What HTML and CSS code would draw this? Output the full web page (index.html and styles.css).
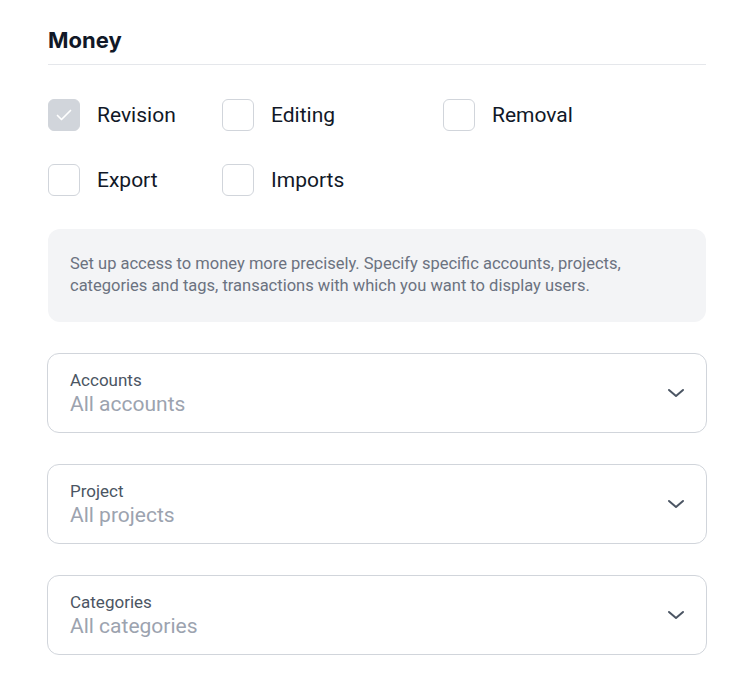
FILE: index.html
```html
<!DOCTYPE html>
<html lang="en">
<head>
    <meta charset="UTF-8">
    <meta name="viewport" content="width=device-width, initial-scale=1.0">
    <title>Money access</title>
    <link rel="stylesheet" href="styles.css">
</head>
<body>
    <div class="container">
        <h2 class="section-title">Money</h2>

        <div class="rights">
            <label class="check">
                <span class="box checked">
                    <svg width="18" height="18" viewBox="0 0 18 18"><path d="M2.5 9.5l4 4 9-9" fill="none" stroke="#fff" stroke-width="1.7" stroke-linecap="round" stroke-linejoin="round"/></svg>
                </span>
                <span class="check-label">Revision</span>
            </label>
            <label class="check">
                <span class="box"></span>
                <span class="check-label">Editing</span>
            </label>
            <label class="check">
                <span class="box"></span>
                <span class="check-label">Removal</span>
            </label>
            <label class="check">
                <span class="box"></span>
                <span class="check-label">Export</span>
            </label>
            <label class="check">
                <span class="box"></span>
                <span class="check-label">Imports</span>
            </label>
        </div>

        <div class="info">
            Set up access to money more precisely. Specify specific accounts, projects, categories and tags, transactions with which you want to display users.
        </div>

        <div class="field">
            <div class="field-text">
                <div class="field-label">Accounts</div>
                <div class="field-value">All accounts</div>
            </div>
            <svg class="chevron" width="20" height="20" viewBox="0 0 20 20"><path d="M3 7l7 6 7-6" fill="none" stroke="#4b5563" stroke-width="2" stroke-linecap="round" stroke-linejoin="round"/></svg>
        </div>

        <div class="field">
            <div class="field-text">
                <div class="field-label">Project</div>
                <div class="field-value">All projects</div>
            </div>
            <svg class="chevron" width="20" height="20" viewBox="0 0 20 20"><path d="M3 7l7 6 7-6" fill="none" stroke="#4b5563" stroke-width="2" stroke-linecap="round" stroke-linejoin="round"/></svg>
        </div>

        <div class="field">
            <div class="field-text">
                <div class="field-label">Categories</div>
                <div class="field-value">All categories</div>
            </div>
            <svg class="chevron" width="20" height="20" viewBox="0 0 20 20"><path d="M3 7l7 6 7-6" fill="none" stroke="#4b5563" stroke-width="2" stroke-linecap="round" stroke-linejoin="round"/></svg>
        </div>
    </div>
</body>
</html>
```

FILE: styles.css
```css
body {
    margin: 0;
    background-color: #fff;
    font-family: 'Roboto', sans-serif;
    color: #111827;
}
.container {
    width: 658px;
    padding: 0 48px;
}
.section-title {
    margin: 0;
    padding-top: 27px;
    padding-bottom: 10px;
    font-family: 'Inter', sans-serif;
    font-size: 22px;
    font-weight: 700;
    line-height: 27px;
    border-bottom: 1px solid #e5e7eb;
}
.rights {
    display: grid;
    grid-template-columns: 174px 221px auto;
    row-gap: 33px;
    margin-top: 34px;
}
.check {
    display: flex;
    align-items: center;
    gap: 17px;
    cursor: pointer;
}
.box {
    width: 32px;
    height: 32px;
    box-sizing: border-box;
    border: 1px solid #d1d5db;
    border-radius: 6px;
    display: flex;
    align-items: center;
    justify-content: center;
}
.box.checked {
    background-color: #d1d5db;
}
.check-label {
    font-size: 21px;
    color: #111827;
}
.info {
    margin-top: 33px;
    padding: 24px 60px 25px 22px;
    background-color: #f3f4f6;
    border-radius: 12px;
    font-size: 16.5px;
    line-height: 22px;
    color: #6b7280;
}
.field {
    display: flex;
    align-items: center;
    justify-content: space-between;
    height: 80px;
    box-sizing: border-box;
    margin: 31px -1px 0;
    padding: 0 20px 0 22px;
    border: 1px solid #d1d5db;
    border-radius: 12px;
}
.field-label {
    font-size: 17px;
    line-height: 22px;
    color: #4b5563;
}
.field-value {
    font-size: 21px;
    line-height: 27px;
    color: #9ca3af;
}
```
